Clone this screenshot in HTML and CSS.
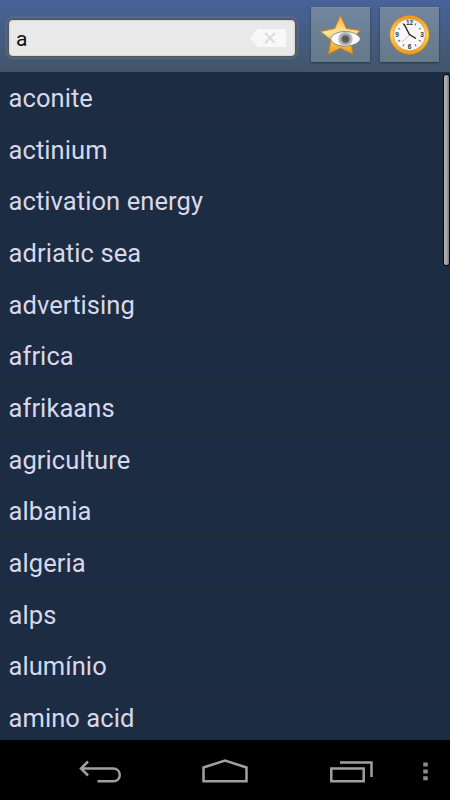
FILE: index.html
```html
<!DOCTYPE html>
<html lang="en">
<head>
    <meta charset="UTF-8">
    <meta name="viewport" content="width=device-width, initial-scale=1.0">
    <title>Dictionary</title>
    <link rel="stylesheet" href="styles.css">
</head>
<body>

<!-- Search bar -->
<header class="topbar">
    <div class="search">
        <span class="query">a</span>
        <svg class="clear" width="36" height="18" viewBox="0 0 36 18">
            <path d="M0 9 L8 0 H36 V18 H8 Z" fill="#f8f8f8"/>
            <path d="M15 4 L25 14 M25 4 L15 14" stroke="#dedede" stroke-width="2"/>
        </svg>
    </div>
    <button type="button" class="tool" aria-label="Favorites">
        <svg width="60" height="56" viewBox="0 0 60 56">
            <defs>
                <linearGradient id="gold" x1="0" y1="0" x2="0" y2="1">
                    <stop offset="0" stop-color="#f5b040"/>
                    <stop offset="0.45" stop-color="#ffe49a"/>
                    <stop offset="0.65" stop-color="#ffc850"/>
                    <stop offset="1" stop-color="#f09a18"/>
                </linearGradient>
                <radialGradient id="iris">
                    <stop offset="0" stop-color="#505050"/>
                    <stop offset="0.45" stop-color="#666"/>
                    <stop offset="0.65" stop-color="#aaa"/>
                    <stop offset="1" stop-color="#c8c8c8"/>
                </radialGradient>
            </defs>
            <path d="M29.500 8.500 L35.300 21.500 L49 23.500 L40 33 L41.500 47 L29.500 41 L17.500 47 L20 33 L9.500 24.500 L23.700 21.500 Z" fill="url(#gold)" stroke="#cf8124" stroke-width="1" stroke-linejoin="round"/>
            <path d="M19.500 32 C22 22 46 22 49.500 32 C46 41.500 22 41.500 19.500 32 Z" fill="#fafafa" stroke="#74746c" stroke-width="0.8"/>
            <circle cx="34.500" cy="32" r="7.300" fill="url(#iris)"/>
        </svg>
    </button>
    <button type="button" class="tool" aria-label="History">
        <svg width="60" height="56" viewBox="0 0 60 56">
            <defs>
                <linearGradient id="ring" x1="0" y1="0" x2="0" y2="1">
                    <stop offset="0" stop-color="#f09a20"/>
                    <stop offset="0.5" stop-color="#ffcf58"/>
                    <stop offset="1" stop-color="#f09c1c"/>
                </linearGradient>
            </defs>
            <circle cx="29.500" cy="27.800" r="19.900" fill="#c27a1c"/>
            <circle cx="29.500" cy="27.800" r="17.600" fill="#f8f8f8" stroke="url(#ring)" stroke-width="3.500"/>
            <circle cx="29.500" cy="27.800" r="15.900" fill="none" stroke="#cf9a4c" stroke-width="0.700"/>
            <g stroke="#666" stroke-width="1">
                <path id="t" d="M29.500 14.500 v2.500" transform="rotate(30 29.500 27.800)"/>
                <use href="#t" transform="rotate(30 29.500 27.800)"/>
                <use href="#t" transform="rotate(90 29.500 27.800)"/>
                <use href="#t" transform="rotate(120 29.500 27.800)"/>
                <use href="#t" transform="rotate(180 29.500 27.800)"/>
                <use href="#t" transform="rotate(210 29.500 27.800)"/>
                <use href="#t" transform="rotate(270 29.500 27.800)"/>
                <use href="#t" transform="rotate(300 29.500 27.800)"/>
            </g>
            <g class="numbers">
                <text x="29.500" y="17.700">12</text>
                <text x="42" y="29.800">3</text>
                <text x="29.500" y="42.300">6</text>
                <text x="17" y="29.800">9</text>
            </g>
            <path d="M30 27.500 L22 35" stroke="#ee9d90" stroke-width="0.800"/>
            <path d="M24 17 L29.500 27.500 L36 31.500" fill="none" stroke="#222" stroke-width="1.400"/>
        </svg>
    </button>
</header>

<!-- Word list -->
<main class="words">
    <ul>
        <li>aconite</li>
        <li>actinium</li>
        <li>activation energy</li>
        <li>adriatic sea</li>
        <li>advertising</li>
        <li>africa</li>
        <li>afrikaans</li>
        <li>agriculture</li>
        <li>albania</li>
        <li>algeria</li>
        <li>alps</li>
        <li>alumínio</li>
        <li>amino acid</li>
    </ul>
    <div class="scrollbar"></div>
</main>

<!-- System navigation -->
<nav class="navbar">
    <svg width="450" height="60" viewBox="0 0 450 60" fill="none" stroke="#a0a0a0" stroke-width="2.500">
        <path d="M88 21.500 L81 28.500 L88 35.500 M81 28.500 H113 C122 28.500 122 41.300 113 41.300 H97.500"/>
        <path d="M203.500 41.300 V27.500 L225 20.500 L246.500 27.500 V41.300 Z"/>
        <path d="M331.300 28.500 H363.700 V41.300 H331.300 Z M340 22.500 H371.500 V37"/>
        <path d="M425.500 22.500 v4 M425.500 29.500 v4 M425.500 36.300 v4" stroke="#8c8c8c" stroke-width="4.500"/>
    </svg>
</nav>

</body>
</html>
```

FILE: styles.css
```css
* {
    box-sizing: border-box;
}

body {
    margin: 0;
    width: 450px;
    height: 800px;
    display: flex;
    flex-direction: column;
    overflow: hidden;
    background-color: #1c2c42;
    font-family: Roboto, "Liberation Sans", sans-serif;
}

.topbar {
    height: 72px;
    flex: none;
    display: flex;
    align-items: flex-start;
    padding: 7px 0 0 7px;
    background: linear-gradient(#48629a, #415669);
}

.search {
    width: 290px;
    height: 40px;
    flex: none;
    margin: 11px 14px 0 0;
    padding: 0 9px 0 7px;
    display: flex;
    align-items: center;
    justify-content: space-between;
    border: 2px solid #55585c;
    border-radius: 6px;
    background-color: #e9e9e9;
    box-shadow: inset 0 0 2px #aaa, 0 0 2px #8b959c;
}

.query {
    padding-top: 2px;
    font-size: 21px;
    line-height: 36px;
    color: #111;
}

.tool {
    width: 59px;
    height: 55px;
    flex: none;
    padding: 0;
    margin-right: 10px;
    border: none;
    background: linear-gradient(#72879f, #657989);
    box-shadow: inset 0 1px 0 #7b8da3, 0 1px 2px #26364a;
}

.tool svg {
    display: block;
}

.numbers {
    font-size: 6.5px;
    font-weight: bold;
    text-anchor: middle;
    fill: #333;
}

.words {
    position: relative;
    height: 668px;
    flex: none;
    overflow: hidden;
}

.words ul {
    margin: 0;
    padding: 0;
    list-style: none;
}

.words li {
    height: 51.66px;
    padding-left: 8.5px;
    border-bottom: 1px solid #28292c;
    font-size: 25.5px;
    line-height: 52px;
    letter-spacing: 0.08px;
    color: #d8d8ea;
}

.scrollbar {
    position: absolute;
    top: 2px;
    right: 0;
    width: 7px;
    height: 192px;
    border: 1px solid #05070c;
    border-radius: 3px;
    background: linear-gradient(90deg, #b5b5b5, #a0a0a0 60%, #777);
}

.navbar {
    height: 60px;
    flex: none;
    background-color: #000;
}

.navbar svg {
    display: block;
}
```
